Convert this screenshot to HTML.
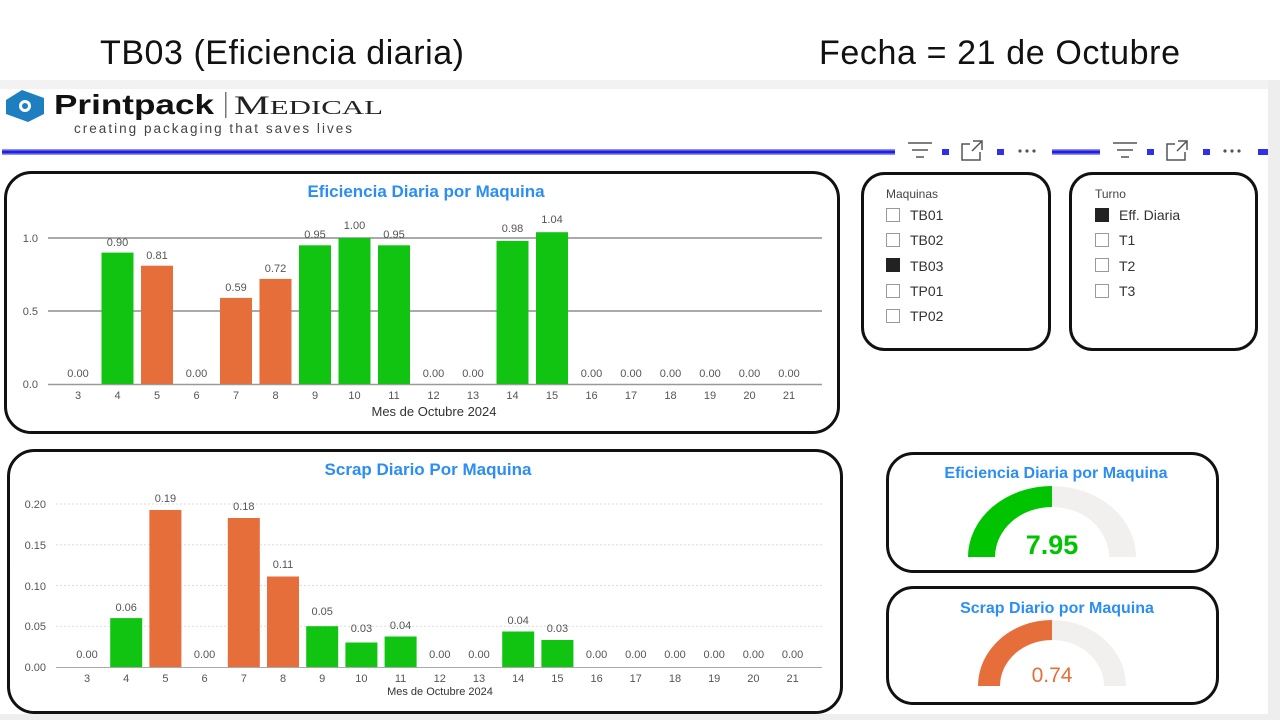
<!DOCTYPE html>
<html><head><meta charset="utf-8"><style>
html,body{margin:0;padding:0;background:#fff;width:1280px;height:720px;overflow:hidden;font-family:"Liberation Sans",sans-serif}
</style></head><body>
<svg width="1280" height="720" xmlns="http://www.w3.org/2000/svg" font-family="'Liberation Sans', sans-serif">
<rect x="0" y="0" width="1280" height="720" fill="#fff"/>
<text x="100" y="64" font-size="34" fill="#111" textLength="364">TB03 (Eficiencia diaria)</text>
<text x="819" y="64" font-size="34" fill="#111" textLength="361">Fecha = 21 de Octubre</text>
<rect x="0" y="80" width="1280" height="9" fill="#f2f2f2"/>
<rect x="1268" y="80" width="12" height="640" fill="#eeeeee"/>
<rect x="0" y="714" width="1280" height="6" fill="#eeeeee"/>
<!-- logo -->
<g>
<path d="M6 100 L22 90 L44 98 L44 114 L28 122 L6 114 Z" fill="#1e7fc0"/>
<circle cx="25" cy="106" r="6" fill="#fff"/><circle cx="25" cy="106" r="3" fill="#1e7fc0"/>
<text x="54" y="114" font-size="28" font-weight="bold" fill="#111" textLength="160" lengthAdjust="spacingAndGlyphs">Printpack</text>
<rect x="225" y="92" width="1.5" height="26" fill="#777"/>
<text x="234" y="114" font-size="26" font-family="'Liberation Serif',serif" fill="#222" textLength="149" lengthAdjust="spacingAndGlyphs">M<tspan font-size="20">EDICAL</tspan></text>
<text x="74" y="133" font-size="13.5" fill="#444" textLength="278">creating packaging that saves lives</text>
</g>
<!-- toolbar lines -->
<rect x="2" y="149" width="893" height="6" fill="#8f8ff5"/><rect x="2" y="150.5" width="893" height="3" fill="#2020e0"/>
<rect x="1052" y="149" width="48" height="6" fill="#8f8ff5"/><rect x="1052" y="150.5" width="48" height="3" fill="#2020e0"/>
<g fill="#3030e8"><rect x="942" y="149" width="7" height="6"/><rect x="997" y="149" width="7" height="6"/><rect x="1147" y="149" width="7" height="6"/><rect x="1203" y="149" width="7" height="6"/><rect x="1258" y="149" width="10" height="6"/></g>
<g stroke="#555" stroke-width="1.5" fill="none">
<path d="M908 143h24M912 150h16M916 157h8"/><path d="M1113 143h24M1117 150h16M1121 157h8"/>
<path d="M970 144h-8v16h18v-8M973 141h9v9M982 141l-10 10"/>
<path d="M1175 144h-8v16h18v-8M1178 141h9v9M1187 141l-10 10"/>
</g>
<g fill="#555"><circle cx="1020" cy="151" r="1.6"/><circle cx="1027" cy="151" r="1.6"/><circle cx="1034" cy="151" r="1.6"/><circle cx="1225" cy="151" r="1.6"/><circle cx="1232" cy="151" r="1.6"/><circle cx="1239" cy="151" r="1.6"/></g>

<!-- boxes -->
<g fill="none" stroke="#111" stroke-width="3">
<rect x="5.5" y="172.5" width="833" height="260" rx="26"/>
<rect x="8.5" y="450.5" width="833" height="262" rx="26"/>
<rect x="862.5" y="173.5" width="187" height="176" rx="22"/>
<rect x="1070.5" y="173.5" width="186" height="176" rx="22"/>
<rect x="887.5" y="453.5" width="330" height="118" rx="26"/>
<rect x="887.5" y="587.5" width="330" height="116" rx="26"/>
</g>

<!-- chart 1 -->
<text x="426" y="197" font-size="17" font-weight="bold" fill="#2b8ef5" text-anchor="middle">Eficiencia Diaria por Maquina</text>
<g stroke="#555" stroke-width="1"><line x1="48" y1="238" x2="822" y2="238"/><line x1="48" y1="311" x2="822" y2="311"/></g>
<line x1="48" y1="384.5" x2="822" y2="384.5" stroke="#999" stroke-width="1.5"/>
<g font-size="11" fill="#555" text-anchor="end"><text x="38" y="242">1.0</text><text x="38" y="315">0.5</text><text x="38" y="388">0.0</text></g>
<g fill="#11c411">
<rect x="101.5" y="252.6" width="32" height="131.4"/><rect x="299" y="245.3" width="32" height="138.7"/><rect x="338.5" y="238" width="32" height="146"/><rect x="378" y="245.3" width="32" height="138.7"/><rect x="496.5" y="240.9" width="32" height="143.1"/><rect x="536" y="232.2" width="32" height="151.8"/>
</g>
<g fill="#e66e3a">
<rect x="141" y="265.7" width="32" height="118.3"/><rect x="220" y="297.9" width="32" height="86.1"/><rect x="259.5" y="278.9" width="32" height="105.1"/>
</g>
<g font-size="11" fill="#555" text-anchor="middle">
<text x="78" y="377">0.00</text><text x="117.5" y="246">0.90</text><text x="157" y="259">0.81</text><text x="196.5" y="377">0.00</text><text x="236" y="291">0.59</text><text x="275.5" y="272">0.72</text><text x="315" y="238">0.95</text><text x="354.5" y="229">1.00</text><text x="394" y="238">0.95</text><text x="433.5" y="377">0.00</text><text x="473" y="377">0.00</text><text x="512.5" y="232">0.98</text><text x="552" y="223">1.04</text><text x="591.5" y="377">0.00</text><text x="631" y="377">0.00</text><text x="670.5" y="377">0.00</text><text x="710" y="377">0.00</text><text x="749.5" y="377">0.00</text><text x="789" y="377">0.00</text>
</g>
<g font-size="11" fill="#555" text-anchor="middle">
<text x="78" y="399">3</text><text x="117.5" y="399">4</text><text x="157" y="399">5</text><text x="196.5" y="399">6</text><text x="236" y="399">7</text><text x="275.5" y="399">8</text><text x="315" y="399">9</text><text x="354.5" y="399">10</text><text x="394" y="399">11</text><text x="433.5" y="399">12</text><text x="473" y="399">13</text><text x="512.5" y="399">14</text><text x="552" y="399">15</text><text x="591.5" y="399">16</text><text x="631" y="399">17</text><text x="670.5" y="399">18</text><text x="710" y="399">19</text><text x="749.5" y="399">20</text><text x="789" y="399">21</text>
</g>
<text x="434" y="416" font-size="13" fill="#333" text-anchor="middle">Mes de Octubre 2024</text>

<!-- chart 2 -->
<text x="428" y="475" font-size="17" font-weight="bold" fill="#2b8ef5" text-anchor="middle">Scrap Diario Por Maquina</text>
<g stroke="#ddd" stroke-width="1" stroke-dasharray="2,2"><line x1="56" y1="504" x2="822" y2="504"/><line x1="56" y1="544.75" x2="822" y2="544.75"/><line x1="56" y1="585.5" x2="822" y2="585.5"/><line x1="56" y1="626.25" x2="822" y2="626.25"/></g>
<line x1="56" y1="667.5" x2="822" y2="667.5" stroke="#aaa" stroke-width="1"/>
<g font-size="11" fill="#555" text-anchor="end"><text x="46" y="508">0.20</text><text x="46" y="549">0.15</text><text x="46" y="590">0.10</text><text x="46" y="630">0.05</text><text x="46" y="671">0.00</text></g>
<g fill="#11c411">
<rect x="110.2" y="618.1" width="32" height="48.9"/><rect x="306.2" y="626.2" width="32" height="40.8"/><rect x="345.4" y="642.5" width="32" height="24.5"/><rect x="384.6" y="636.5" width="32" height="30.5"/><rect x="502.2" y="631.5" width="32" height="35.5"/><rect x="541.4" y="640" width="32" height="27"/>
</g>
<g fill="#e66e3a">
<rect x="149.4" y="510" width="32" height="157"/><rect x="227.8" y="518" width="32" height="149"/><rect x="267" y="576.5" width="32" height="90.5"/>
</g>
<g font-size="11" fill="#555" text-anchor="middle">
<text x="87" y="658">0.00</text><text x="126.2" y="611">0.06</text><text x="165.4" y="502">0.19</text><text x="204.6" y="658">0.00</text><text x="243.8" y="510">0.18</text><text x="283" y="568">0.11</text><text x="322.2" y="615">0.05</text><text x="361.4" y="632">0.03</text><text x="400.6" y="629">0.04</text><text x="439.8" y="658">0.00</text><text x="479" y="658">0.00</text><text x="518.2" y="624">0.04</text><text x="557.4" y="632">0.03</text><text x="596.6" y="658">0.00</text><text x="635.8" y="658">0.00</text><text x="675" y="658">0.00</text><text x="714.2" y="658">0.00</text><text x="753.4" y="658">0.00</text><text x="792.6" y="658">0.00</text>
</g>
<g font-size="11" fill="#555" text-anchor="middle">
<text x="87" y="682">3</text><text x="126.2" y="682">4</text><text x="165.4" y="682">5</text><text x="204.6" y="682">6</text><text x="243.8" y="682">7</text><text x="283" y="682">8</text><text x="322.2" y="682">9</text><text x="361.4" y="682">10</text><text x="400.6" y="682">11</text><text x="439.8" y="682">12</text><text x="479" y="682">13</text><text x="518.2" y="682">14</text><text x="557.4" y="682">15</text><text x="596.6" y="682">16</text><text x="635.8" y="682">17</text><text x="675" y="682">18</text><text x="714.2" y="682">19</text><text x="753.4" y="682">20</text><text x="792.6" y="682">21</text>
</g>
<text x="440" y="695" font-size="11" fill="#333" text-anchor="middle">Mes de Octubre 2024</text>

<!-- slicers -->
<text x="886" y="198" font-size="12" fill="#444">Maquinas</text>
<g fill="#fff" stroke="#999" stroke-width="1">
<rect x="886.5" y="208.5" width="13" height="13"/><rect x="886.5" y="233.5" width="13" height="13"/><rect x="886.5" y="284.5" width="13" height="13"/><rect x="886.5" y="309.5" width="13" height="13"/>
<rect x="1095.5" y="233.5" width="13" height="13"/><rect x="1095.5" y="258.5" width="13" height="13"/><rect x="1095.5" y="284.5" width="13" height="13"/>
</g>
<rect x="886" y="258" width="14" height="14" fill="#222"/>
<rect x="1095" y="208" width="14" height="14" fill="#222"/>
<g font-size="14" fill="#333">
<text x="910" y="220">TB01</text><text x="910" y="245">TB02</text><text x="910" y="271">TB03</text><text x="910" y="296">TP01</text><text x="910" y="321">TP02</text>
<text x="1119" y="220">Eff. Diaria</text><text x="1119" y="245">T1</text><text x="1119" y="271">T2</text><text x="1119" y="296">T3</text>
</g>
<text x="1095" y="198" font-size="12" fill="#444">Turno</text>

<!-- gauges -->
<text x="1056" y="478" font-size="16" font-weight="bold" fill="#2b8ef5" text-anchor="middle">Eficiencia Diaria por Maquina</text>
<path d="M968 557 A84 71 0 0 1 1136 557 L1109 557 A57 50 0 0 0 995 557 Z" fill="#f1f0ee"/>
<path d="M968 557 A84 71 0 0 1 1052 486 L1052 507 A57 50 0 0 0 995 557 Z" fill="#00c400"/>
<text x="1052" y="554" font-size="27" font-weight="bold" fill="#00c400" text-anchor="middle">7.95</text>

<text x="1057" y="613" font-size="16" font-weight="bold" fill="#2b8ef5" text-anchor="middle">Scrap Diario por Maquina</text>
<path d="M978 686 A74 66 0 0 1 1126 686 L1104 686 A52 46 0 0 0 1000 686 Z" fill="#f1f0ee"/>
<path d="M978 686 A74 66 0 0 1 1052 620 L1052 640 A52 46 0 0 0 1000 686 Z" fill="#e66e3a"/>
<text x="1052" y="682" font-size="21" fill="#e66e3a" text-anchor="middle">0.74</text>
</svg>
</body></html>
